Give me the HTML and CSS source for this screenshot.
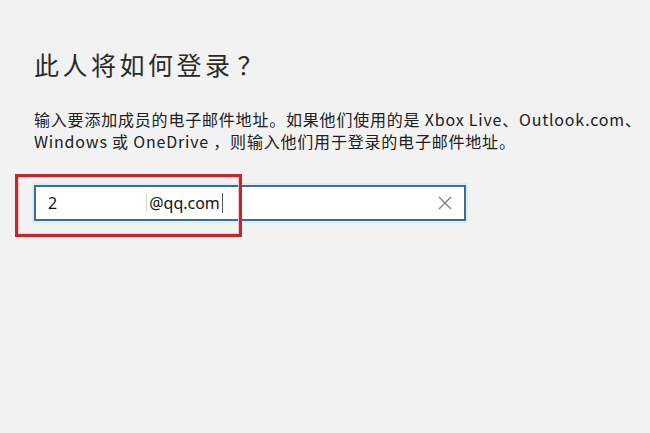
FILE: index.html
```html
<!DOCTYPE html>
<html lang="zh-CN">
	<head>
		<meta charset="UTF-8" />
		<meta name="viewport" content="width=device-width, initial-scale=1.0" />
		<title>添加用户</title>
		<link rel="stylesheet" href="styles.css">
	</head>
	<body>
		<div class="page">
			<h1 class="title">此人将如何登录<span class="qmark">？</span></h1>
			<p class="desc">
				输入要添加成员的电子邮件地址。如果他们使用的是 Xbox Live、Outlook.com、<br />
				Windows 或 OneDrive ，则输入他们用于登录的电子邮件地址。
			</p>

			<div class="field-wrap">
				<div class="email-box">
					<div class="email-text">
						<span>2</span>
						<span class="hidden-part"></span>
						<span>@qq.com</span>
						<span class="caret"></span>
					</div>
					<button class="clear-button" aria-label="Clear">
						<svg width="14" height="14" viewBox="0 0 14 14">
							<path d="M1 1L13 13M13 1L1 13" stroke="currentColor" stroke-width="1.3" fill="none" />
						</svg>
					</button>
				</div>
				<!-- red frame drawn around the address -->
				<div class="mark"></div>
			</div>
		</div>
	</body>
</html>
```

FILE: styles.css
```css
* {
	margin: 0;
	padding: 0;
	box-sizing: border-box;
	font-family: "Noto Sans", "Noto Sans CJK SC", sans-serif;
}
body {
	background-color: #f2f2f2;
	color: #1c1c1c;
	width: 650px;
	height: 433px;
	overflow: hidden;
}
.page {
	padding: 46px 0 0 34px;
}
.title {
	font-size: 25px;
	font-weight: 400;
	line-height: 36px;
	font-family: "Noto Sans CJK SC", sans-serif;
	letter-spacing: 3.5px;
	color: #2a2a2a;
}
.qmark {
	margin-left: 4px;
}
.desc {
	margin-top: 25px;
	font-family: "Noto Sans CJK SC", sans-serif;
	font-size: 16px;
	line-height: 22px;
	color: #202020;
	letter-spacing: 0.8px;
	white-space: nowrap;
}
.field-wrap {
	position: relative;
	margin-top: 33px;
	width: 432px;
}
.email-box {
	display: flex;
	align-items: center;
	height: 36px;
	background-color: #fff;
	border: 2px solid #3a6f92;
	box-shadow: 0 0 0 2px #dcedf6;
	padding: 0 10px 0 12px;
}
.email-text {
	display: flex;
	align-items: center;
	flex: 1;
	font-size: 16px;
	color: #111;
}
.hidden-part {
	width: 90px;
	height: 18px;
	border-right: 1px solid #d6d6d6;
	margin-right: 2px;
}
.caret {
	width: 1px;
	height: 20px;
	background-color: #555;
	margin-left: 2px;
}
.clear-button {
	background: none;
	border: none;
	color: #7a7a7a;
	width: 18px;
	height: 18px;
	display: flex;
	justify-content: center;
	align-items: center;
}
.mark {
	position: absolute;
	left: -19px;
	top: -11px;
	width: 227px;
	height: 63px;
	border: 3px solid #c1272d;
	box-shadow: inset 0 0 0 1px #f3c9cb;
	pointer-events: none;
}
```
